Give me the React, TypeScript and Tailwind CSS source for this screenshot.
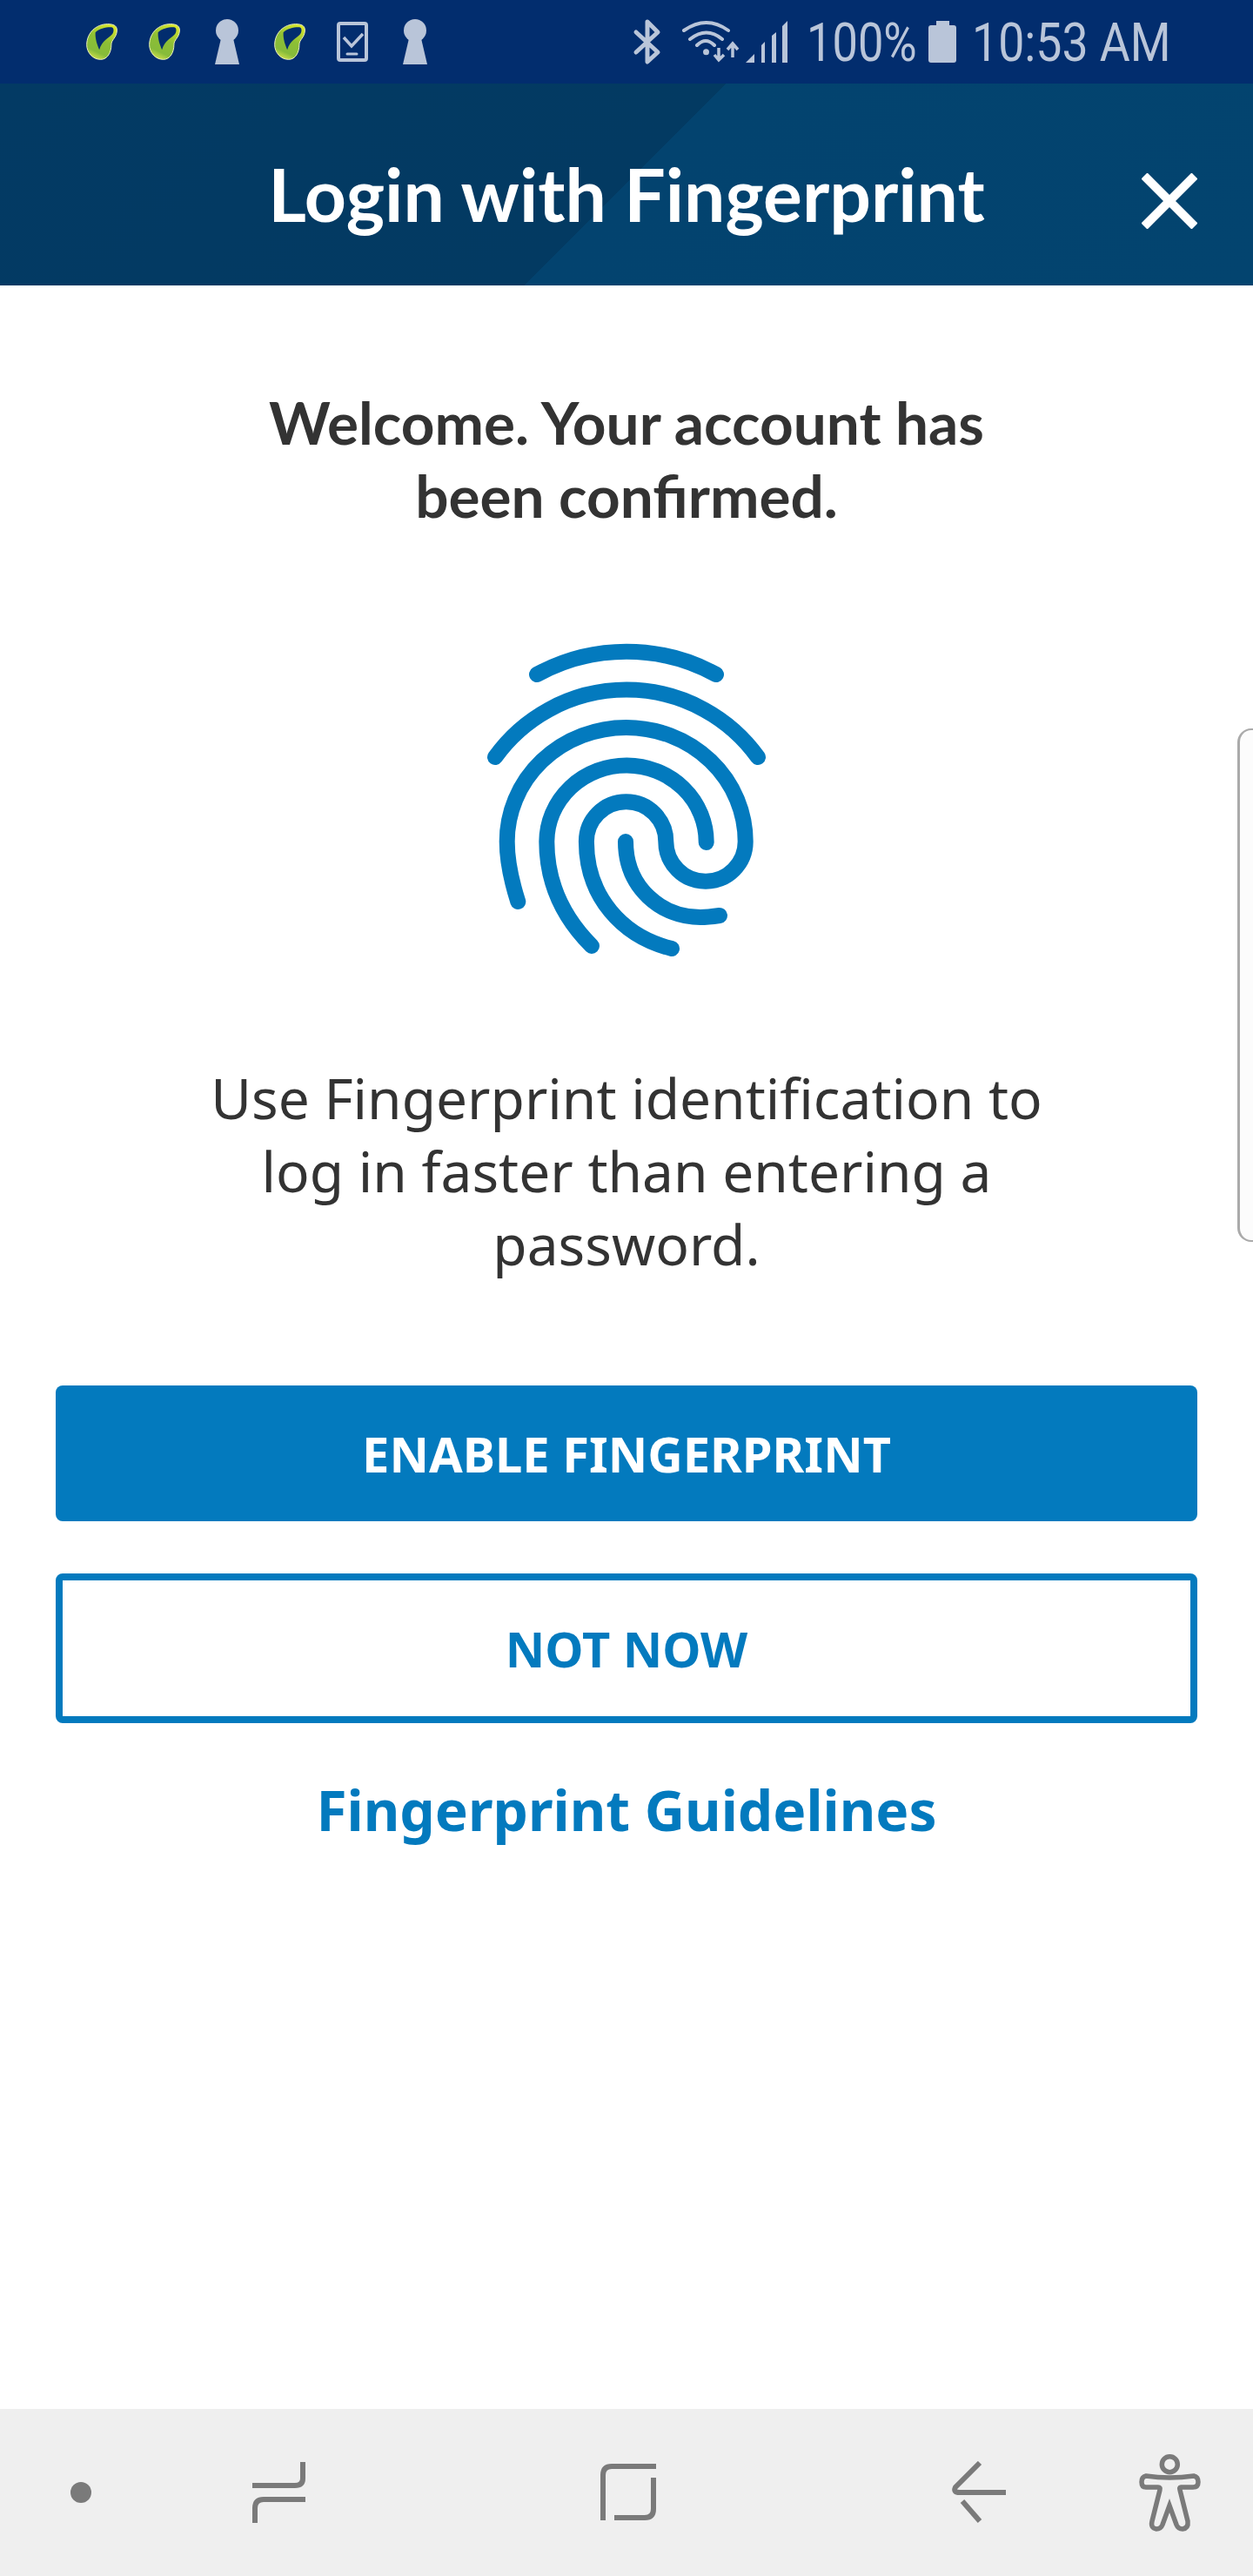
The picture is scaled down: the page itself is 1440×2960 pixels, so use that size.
import { useId } from "react";

function Leaf() {
  const id = useId();
  return (
    <svg viewBox="-2 -2 112 131" className="h-[42px] w-9 shrink-0">
      <defs>
        <linearGradient id={id} x1="0.7" y1="0" x2="0.3" y2="1">
          <stop offset="0" stopColor="#d8e62c" />
          <stop offset="0.45" stopColor="#8dbf35" />
          <stop offset="0.8" stopColor="#86bb3a" />
          <stop offset="1" stopColor="#cfe04a" />
        </linearGradient>
      </defs>
      <path
        d="M75 0C100 0 110 8 108 26C106 50 88 55 88 75C88 100 75 127 50 127C20 127 0 100 0 75C0 30 35 0 75 0Z"
        fill={`url(#${id})`}
        stroke="#eef4c0"
        strokeWidth="3"
      />
      <path
        d="M31 30C45 16 75 10 91 12C98 14 98 30 90 38C78 50 55 60 45 92C38 75 30 55 31 30Z"
        fill="#022d6e"
      />
    </svg>
  );
}

function Keyhole() {
  return (
    <svg viewBox="0 0 28 52" className="h-[52px] w-7 shrink-0 fill-[#b9c5d9]">
      <circle cx="14" cy="13" r="13" />
      <path d="M7.5 20H20.5L28 52H0Z" />
    </svg>
  );
}

function PhoneCheck() {
  return (
    <svg viewBox="0 0 36 46" className="h-[46px] w-9 shrink-0" fill="none" stroke="#b9c5d9">
      <rect x="2" y="2" width="32" height="42" rx="2" strokeWidth="4" />
      <path d="M8 18L17 28L30 14" strokeWidth="3.5" />
      <path d="M12 37H23" strokeWidth="3" strokeLinecap="round" />
    </svg>
  );
}

function ConnectivityIcons() {
  return (
    <svg viewBox="0 0 200 70" className="h-[70px] w-[200px] shrink-0 translate-y-[2px]" fill="none" stroke="#b9c5d9">
      <path d="M11 22L36 45L24 56V10L36 22L11 45" strokeWidth="5" strokeLinejoin="round" strokeLinecap="round" />
      <path d="M66 20Q92 2 117 20M73 30Q92 15 110 30M81 37Q91 27 101 37" strokeWidth="4" strokeLinecap="round" />
      <circle cx="91.5" cy="44.7" r="3.5" fill="#b9c5d9" stroke="none" />
      <path d="M106 40V53M101 48L106 54L112 48M122 51V36M116 42L122 35L128 42" strokeWidth="3.5" />
      <path d="M137 57L147 47V57Z" fill="#b9c5d9" stroke="none" />
      <path d="M155 57V37L159 33V57ZM167 57V26L172 22V57ZM179 57V15L185 9V57Z" fill="#b9c5d9" stroke="none" />
    </svg>
  );
}

function Battery() {
  return (
    <svg viewBox="0 0 32 48" className="h-12 w-8 shrink-0 fill-[#b9c5d9]">
      <path d="M9 0H24V5H9Z" />
      <rect x="0" y="5" width="32" height="43" rx="3" />
    </svg>
  );
}

function StatusBar() {
  return (
    <div className="flex h-24 shrink-0 items-center justify-between bg-[#022d6e] pl-[99px] pr-[100px] font-['Roboto',sans-serif] text-[62px] leading-none text-[#b9c5d9]">
      <div className="flex items-center">
        <Leaf />
        <div className="ml-9"><Leaf /></div>
        <div className="ml-10"><Keyhole /></div>
        <div className="ml-10"><Leaf /></div>
        <div className="ml-9"><PhoneCheck /></div>
        <div className="ml-10"><Keyhole /></div>
      </div>
      <div className="flex items-center">
        <ConnectivityIcons />
        <div className="ml-[7px] w-[123px] origin-left translate-y-px scale-x-[0.845] whitespace-nowrap">100%</div>
        <div className="ml-[17px]"><Battery /></div>
        <div className="ml-[18px] w-[223px] origin-left translate-y-px scale-x-[0.865] whitespace-nowrap">10:53 AM</div>
      </div>
    </div>
  );
}

function Header() {
  return (
    <header className="grid h-[232px] shrink-0 grid-cols-[1fr_auto_1fr] items-center bg-[linear-gradient(135deg,#033a64_0%,#033a62_49.9%,#03436f_49.9%,#03446f_100%)] px-16 pt-[22px]">
      <div />
      <h1 className="font-['Lato',sans-serif] text-[84px] font-bold leading-none text-white">Login with Fingerprint</h1>
      <button className="mt-4 justify-self-end">
        <svg viewBox="0 0 64 64" className="block h-16 w-16" stroke="#ffffff" strokeWidth="10">
          <path d="M3 3L61 61M61 3L3 61" />
        </svg>
      </button>
    </header>
  );
}

function FingerprintMark() {
  return (
    <svg viewBox="0 0 400 400" className="mt-[99px] h-[400px] w-[400px]" fill="none" stroke="#037abe" strokeWidth="18" strokeLinecap="round">
      <path d="M97 65A215 215 0 0 1 303 65" />
      <path d="M49 160A186 186 0 0 1 351 160" />
      <path d="M75.3 326C67 300 62.7 280 62.7 257A137 131 0 0 1 336.7 257A45.7 45.7 0 0 1 245.3 257A45.7 45.7 0 0 0 153.9 257C153.9 320 195 366 252 380" />
      <path d="M160 377C128 345 108.3 305 108.3 257A91.7 88 0 0 1 291.7 258" />
      <path d="M199 257C199 310 240 344 285 344C293 344 300 343 307 342" />
    </svg>
  );
}

function NavIcons() {
  return (
    <nav className="flex h-48 shrink-0 items-center bg-[#efefef] pl-[81px]">
      <div className="h-6 w-6 rounded-full bg-[#7a7a7a]" />
      <svg viewBox="0 0 63 72" className="ml-[184px] h-[72px] w-[63px]" fill="none" stroke="#7a7a7a" strokeWidth="6">
        <path d="M59 1V20Q59 28 50 28H1" />
        <path d="M62 44H14Q4 44 4 54V71" />
      </svg>
      <svg viewBox="0 0 66 68" className="ml-[337px] h-[68px] w-[66px]" fill="none" stroke="#7a7a7a" strokeWidth="6">
        <path d="M65 4H14Q4 4 4 14V66" />
        <path d="M62 17V53Q62 63 52 63H17" />
      </svg>
      <svg viewBox="0 0 64 72" className="ml-[338px] h-[72px] w-16" fill="none" stroke="#7a7a7a" strokeWidth="6">
        <path d="M33 2L5 30Q2 36 10 36H63" />
        <path d="M13 46L33 69" />
      </svg>
      <svg viewBox="0 0 120 110" className="ml-[124px] h-[110px] w-[120px]" fill="none" stroke="#7a7a7a" strokeWidth="5.5">
        <circle cx="63.3" cy="22.7" r="9" />
        <path d="M36 36Q63 40 91 36Q96 37 96 43Q96 49 90 49L76 49Q74 49 75 52L84 88Q85 96 78 97Q73 97 71 92L63 70L55 92Q53 97 48 97Q41 96 43 88L52 52Q53 49 50 49L36 49Q31 49 31 43Q31 37 36 36Z" />
      </svg>
    </nav>
  );
}

export default function App() {
  return (
    <div className="relative flex h-[2960px] w-[1440px] flex-col overflow-hidden bg-white font-['Noto_Sans',sans-serif]">
      <StatusBar />
      <Header />

      <main className="flex flex-1 flex-col items-center px-16 pt-[115px]">
        <h2 className="text-center font-['Lato',sans-serif] text-[67.5px] font-bold leading-[84px] text-[#333333]">
          Welcome. Your account has
          <br />
          been confirmed.
        </h2>
        <FingerprintMark />
        <p className="mt-[110px] text-center text-[64px] leading-[84px] text-[#333333]">
          Use Fingerprint identification to
          <br />
          log in faster than entering a
          <br />
          password.
        </p>
        <button className="mt-[120px] h-[156px] w-full rounded-lg bg-[#037abe] text-[56px] font-bold text-white">
          ENABLE FINGERPRINT
        </button>
        <button className="mt-[60px] h-[172px] w-full rounded-lg border-8 border-[#037abe] text-[56px] font-bold text-[#037abe]">
          NOT NOW
        </button>
        <a className="mt-[58px] text-[64px] font-bold leading-[84px] text-[#037abe]">Fingerprint Guidelines</a>
      </main>

      <NavIcons />

      {/* edge panel handle sits over the page */}
      <div className="absolute left-[1422px] top-[837px] h-[590px] w-[18px] rounded-l-2xl border-y-2 border-l-[3px] border-[#aaaaaa] bg-[#fcfcfc]" />
    </div>
  );
}
